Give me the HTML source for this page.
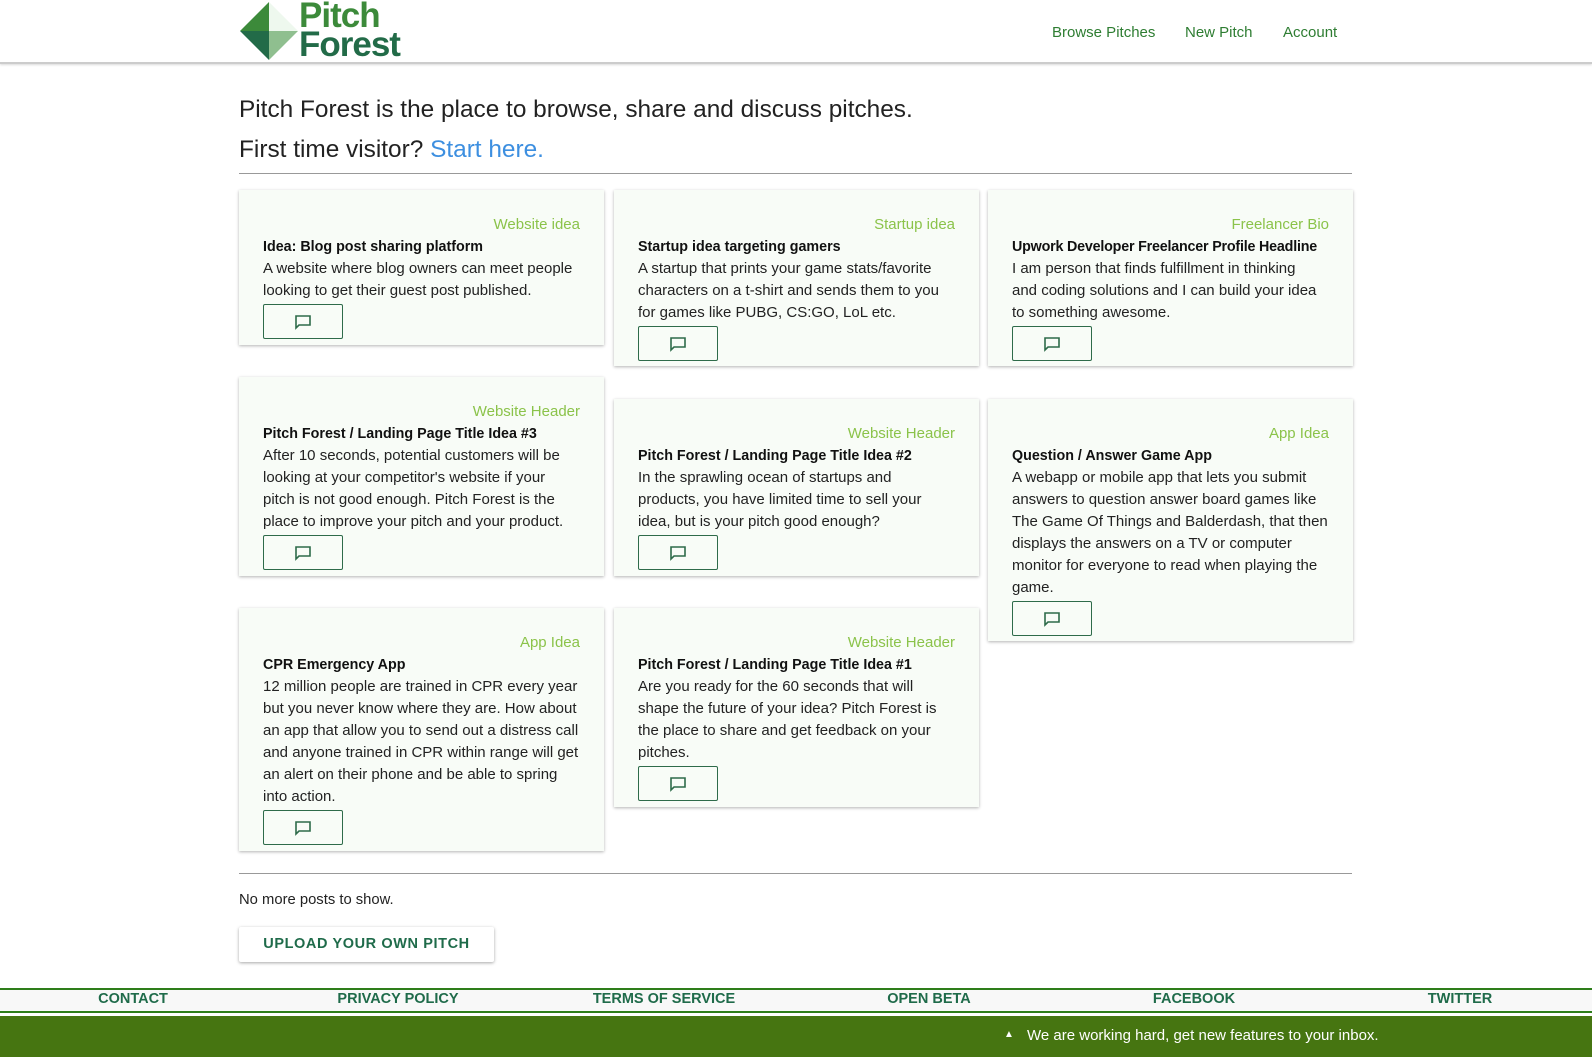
<!DOCTYPE html>
<html><head><meta charset="utf-8"><style>
*{box-sizing:border-box;margin:0;padding:0}
body{width:1592px;height:1057px;overflow:hidden;background:#fff;font-family:"Liberation Sans",sans-serif;color:#222;position:relative}
.hdr{position:absolute;left:0;top:0;width:1592px;height:64px;background:#fff;border-bottom:2px solid #ccc;box-shadow:0 1px 2px rgba(0,0,0,.15)}
.logo{position:absolute;left:240px;top:2px}
.logotxt{position:absolute;left:299px;top:1px;font-weight:bold;font-size:35px;line-height:29px;letter-spacing:-1px}
.nav{position:absolute;top:24px;font-size:15px;color:#2e7d32}
h1{position:absolute;left:239px;font-weight:normal;font-size:24.4px;color:#222}
.hr{position:absolute;left:239px;width:1113px;height:1px;background:#999}
.card{position:absolute;width:365px;background:#f8fcf7;box-shadow:0 1px 3px rgba(0,0,0,.3);padding:24px 24px 8px;font-size:15px;line-height:22px}
.lab{text-align:right;color:#8bc34a}
.t{font-weight:bold;color:#111;font-size:14.3px}
.btn{width:80px;height:35px;border:1px solid #2e6b4a;border-radius:2px;margin-top:2px;display:flex;align-items:center;justify-content:center}
.foot{position:absolute;left:0;top:988px;width:1592px;height:25px;background:#f8f8f8;border-top:2px solid #2e7d1a;border-bottom:2px solid #2e7d1a}
.foot span{position:absolute;top:1px;font-size:14.5px;color:#1f6b4a;font-weight:bold;transform:translateX(-50%)}
.bar{position:absolute;left:0;top:1016px;width:1592px;height:41px;background:#467511;color:#fff;font-size:15px}
</style></head><body>
<div class="hdr">
<svg class="logo" width="58" height="58" viewBox="0 0 58 58"><polygon points="29,0 0,29 29,29" fill="#3c8a3a"/><polygon points="29,0 58,29 29,29" fill="#eef8ee"/><polygon points="0,29 29,58 29,29" fill="#226b48"/><polygon points="58,29 29,58 29,29" fill="#8fbf8f"/></svg>
<div class="logotxt"><span style="color:#3c8a3a">Pitch</span><br><span style="color:#226b48">Forest</span></div>
<span class="nav" style="left:1052px">Browse Pitches</span>
<span class="nav" style="left:1185px">New Pitch</span>
<span class="nav" style="left:1283px">Account</span>
</div>
<h1 style="top:96px">Pitch Forest is the place to browse, share and discuss pitches.</h1>
<h1 style="top:136px">First time visitor? <span style="color:#3d8fe0">Start here.</span></h1>
<div class="hr" style="top:173px"></div>

<div class="card" style="left:239px;top:190px;height:155px"><div class="lab">Website idea</div><div class="t">Idea: Blog post sharing platform</div><div>A website where blog owners can meet people looking to get their guest post published.</div><div class="btn"><svg width="18" height="16" viewBox="0 0 18 16"><path d="M2 2h14v9H5l-3 3z" fill="none" stroke="#2e6b4a" stroke-width="1.6"/></svg></div></div>

<div class="card" style="left:614px;top:190px;height:176px"><div class="lab">Startup idea</div><div class="t">Startup idea targeting gamers</div><div>A startup that prints your game stats/favorite characters on a t-shirt and sends them to you for games like PUBG, CS:GO, LoL etc.</div><div class="btn"><svg width="18" height="16" viewBox="0 0 18 16"><path d="M2 2h14v9H5l-3 3z" fill="none" stroke="#2e6b4a" stroke-width="1.6"/></svg></div></div>

<div class="card" style="left:988px;top:190px;height:176px"><div class="lab">Freelancer Bio</div><div class="t" style="letter-spacing:-0.2px;white-space:nowrap">Upwork Developer Freelancer Profile Headline</div><div>I am person that finds fulfillment in thinking<br>and coding solutions and I can build your idea<br>to something awesome.</div><div class="btn"><svg width="18" height="16" viewBox="0 0 18 16"><path d="M2 2h14v9H5l-3 3z" fill="none" stroke="#2e6b4a" stroke-width="1.6"/></svg></div></div>

<div class="card" style="left:239px;top:377px;height:199px"><div class="lab">Website Header</div><div class="t">Pitch Forest / Landing Page Title Idea #3</div><div>After 10 seconds, potential customers will be looking at your competitor's website if your pitch is not good enough. Pitch Forest is the place to improve your pitch and your product.</div><div class="btn"><svg width="18" height="16" viewBox="0 0 18 16"><path d="M2 2h14v9H5l-3 3z" fill="none" stroke="#2e6b4a" stroke-width="1.6"/></svg></div></div>

<div class="card" style="left:614px;top:399px;height:177px"><div class="lab">Website Header</div><div class="t">Pitch Forest / Landing Page Title Idea #2</div><div>In the sprawling ocean of startups and products, you have limited time to sell your idea, but is your pitch good enough?</div><div class="btn"><svg width="18" height="16" viewBox="0 0 18 16"><path d="M2 2h14v9H5l-3 3z" fill="none" stroke="#2e6b4a" stroke-width="1.6"/></svg></div></div>

<div class="card" style="left:988px;top:399px;height:242px"><div class="lab">App Idea</div><div class="t">Question / Answer Game App</div><div>A webapp or mobile app that lets you submit answers to question answer board games like The Game Of Things and Balderdash, that then displays the answers on a TV or computer monitor for everyone to read when playing the game.</div><div class="btn"><svg width="18" height="16" viewBox="0 0 18 16"><path d="M2 2h14v9H5l-3 3z" fill="none" stroke="#2e6b4a" stroke-width="1.6"/></svg></div></div>

<div class="card" style="left:239px;top:608px;height:243px"><div class="lab">App Idea</div><div class="t">CPR Emergency App</div><div>12 million people are trained in CPR every year but you never know where they are. How about an app that allow you to send out a distress call and anyone trained in CPR within range will get an alert on their phone and be able to spring into action.</div><div class="btn"><svg width="18" height="16" viewBox="0 0 18 16"><path d="M2 2h14v9H5l-3 3z" fill="none" stroke="#2e6b4a" stroke-width="1.6"/></svg></div></div>

<div class="card" style="left:614px;top:608px;height:199px"><div class="lab">Website Header</div><div class="t">Pitch Forest / Landing Page Title Idea #1</div><div>Are you ready for the 60 seconds that will shape the future of your idea? Pitch Forest is the place to share and get feedback on your pitches.</div><div class="btn"><svg width="18" height="16" viewBox="0 0 18 16"><path d="M2 2h14v9H5l-3 3z" fill="none" stroke="#2e6b4a" stroke-width="1.6"/></svg></div></div>

<div class="hr" style="top:873px"></div>
<div style="position:absolute;left:239px;top:892px;font-size:14.8px">No more posts to show.</div>
<div style="position:absolute;left:239px;top:927px;width:255px;height:35px;background:#fff;box-shadow:0 1px 3px rgba(0,0,0,.35);border-radius:2px;text-align:center;line-height:35px;font-weight:bold;font-size:14.5px;letter-spacing:0.6px;color:#1f6b4a">UPLOAD YOUR OWN PITCH</div>

<div class="foot">
<span style="left:133px">CONTACT</span><span style="left:398px">PRIVACY POLICY</span><span style="left:664px">TERMS OF SERVICE</span><span style="left:929px">OPEN BETA</span><span style="left:1194px">FACEBOOK</span><span style="left:1460px">TWITTER</span>
</div>
<div class="bar"><span style="position:absolute;left:1004px;top:13px;font-size:10px">▲</span><span style="position:absolute;left:1027px;top:11px">We are working hard, get new features to your inbox.</span></div>
</body></html>
